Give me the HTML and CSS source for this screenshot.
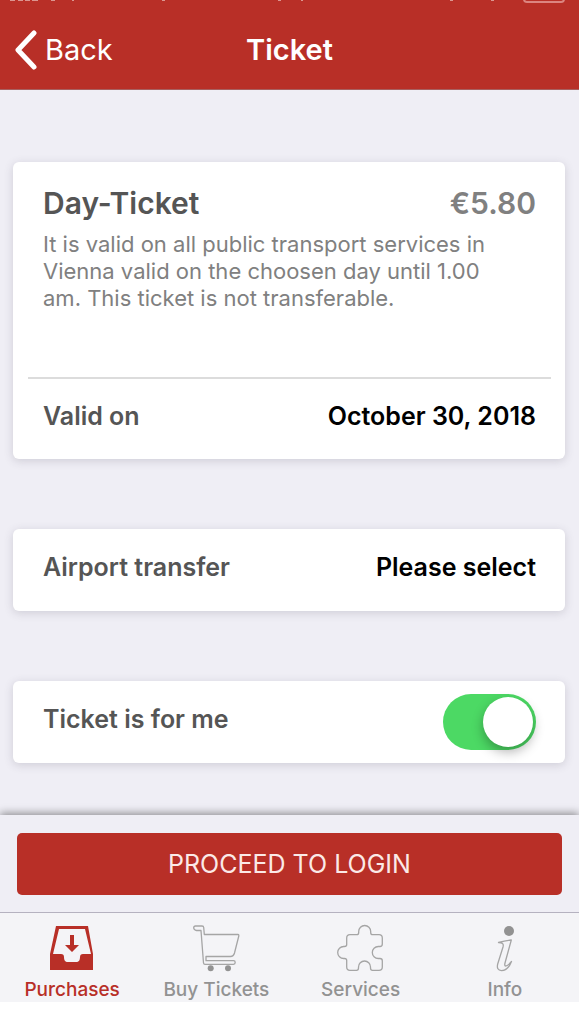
FILE: index.html
```html
<!DOCTYPE html>
<html lang="en">
<head>
<meta charset="utf-8">
<meta name="viewport" content="width=device-width, initial-scale=1">
<title>Ticket</title>
<link rel="stylesheet" href="styles.css">
</head>
<body>
<div class="app">
  <header class="header">
    <div class="status" aria-hidden="true">
      <svg class="status-signal" viewBox="0 0 320 3" width="320" height="3">
        <path d="M10 0h5v1h-5zM18 0h5v1h-5zM25 0h5v1h-5zM32 0h6v1h-6zM51 0h4v1h-4zM72 0h2v1h-2zM162 0h3v1h-3zM278 0h3v1h-3zM301 0h2v1h-2z"/>
      </svg>
      <svg class="status-battery" viewBox="0 0 120 3" width="120" height="3">
        <path d="M4 0h3v1h-3zM45 0h3v1h-3z"/>
        <path class="battery-edge" d="M78-6V-1Q78 2 81 2H115Q118 2 118-1V-6"/>
      </svg>
    </div>
    <div class="navbar">
      <button class="back" type="button">
        <svg viewBox="0 0 24 42" width="24" height="42" aria-hidden="true"><path d="M21 4 5 21 21 38"/></svg>
        <span>Back</span>
      </button>
      <h1 class="title">Ticket</h1>
    </div>
  </header>

  <main class="content">
    <section class="card">
      <div class="ticket">
        <div class="ticket-head">
          <h2 class="ticket-name">Day-Ticket</h2>
          <span class="price">€5.80</span>
        </div>
        <p class="description">It is valid on all public transport services in Vienna valid on the choosen day until 1.00 am. This ticket is not transferable.</p>
      </div>
      <div class="row row-divided">
        <span class="label" id="valid-label">Valid on</span>
        <button class="value" type="button" aria-describedby="valid-label">October 30, 2018</button>
      </div>
    </section>

    <section class="card">
      <div class="row">
        <span class="label" id="airport-label">Airport transfer</span>
        <button class="value" type="button" aria-describedby="airport-label">Please select</button>
      </div>
    </section>

    <section class="card">
      <div class="row">
        <label class="label" for="for-me">Ticket is for me</label>
        <input class="toggle" type="checkbox" id="for-me" checked>
      </div>
    </section>
  </main>

  <div class="action">
    <button class="proceed" type="button">PROCEED TO LOGIN</button>
  </div>

  <nav class="tabs">
    <a class="tab tab-active" href="#purchases">
      <svg class="icon" viewBox="0 0 48 48" aria-hidden="true">
        <path class="solid" fill-rule="evenodd" d="M8 2H40L45 30V46H2V30ZM11 5 5 30H13C15 30 16 31 16 33C16 36 17 38 20 38H28C31 38 32 36 32 33C32 31 33 30 35 30H43L37 5ZM22 11H26V21H31L24 28 17 21H22Z"/>
      </svg>
      <span>Purchases</span>
    </a>
    <a class="tab" href="#buy">
      <svg class="icon" viewBox="0 0 48 48" aria-hidden="true">
        <path class="line" d="M3.500 2H10Q11.600 2 11.700 3.500L12.300 10.500H46Q47 10.500 46.800 12L42.500 29Q41.500 32.500 38.500 32.500H14V36.700H41.500Q43.200 36.700 43.200 38.500T41.500 40.300H13Q11.700 40.300 11.500 39L9 6.500H4.500Q2 6.200 1.700 4Q1.700 2 3.500 2Z"/>
        <circle class="solid" cx="18.700" cy="44.300" r="3"/>
        <circle class="solid" cx="36" cy="44.300" r="3"/>
      </svg>
      <span>Buy Tickets</span>
    </a>
    <a class="tab" href="#services">
      <svg class="icon" viewBox="0 0 48 48" aria-hidden="true">
        <path class="line" d="M13 10.700H19.700Q21.700 10.700 21.700 8.500V7.500A6 6 0 0 1 33.700 7.500V8.500Q33.700 10.700 35.700 10.700H42Q45.300 10.700 45.300 14V20Q45.300 22.500 43 22.500H41.300A6 6 0 0 0 41.300 34.500H43Q45.300 34.500 45.300 36.700V43Q45.300 46.300 42 46.300H35.500Q33.500 46.300 33.500 44V43A6 6 0 0 0 21.500 43V44Q21.500 46.300 19.500 46.300H13Q9.700 46.300 9.700 43V36.500Q9.700 34.500 7.500 34.500H6.700A6 6 0 0 1 6.700 22.500H7.500Q9.700 22.500 9.700 20.500V14Q9.700 10.700 13 10.700Z"/>
      </svg>
      <span>Services</span>
    </a>
    <a class="tab" href="#info">
      <svg class="icon" viewBox="0 0 48 48" aria-hidden="true">
        <circle class="solid" cx="28" cy="7" r="5"/>
        <path class="line" d="M17.500 18.500Q24 17 30.300 16L24 39Q23.300 42 24.500 42Q26.500 42 30.500 37.500Q27 46.600 20.500 46.600Q15.200 46.300 16.700 40L22 23Q22.700 20.500 21.500 19.500Q20.500 18.500 17.500 18.500Z"/>
      </svg>
      <span>Info</span>
    </a>
  </nav>
</div>
</body>
</html>
```
FILE: styles.css
```css
* {
  box-sizing: border-box;
}

body {
  margin: 0;
  background: #fff;
  font-family: Inter, "Liberation Sans", sans-serif;
}

button {
  margin: 0;
  padding: 0;
  border: 0;
  background: none;
  font: inherit;
  color: inherit;
  cursor: pointer;
}

.app {
  background: #efeef5;
}

.header {
  background: #b82f27;
  color: #fff;
  border-bottom: 1px solid #a8605f;
}

.status {
  display: flex;
  justify-content: space-between;
  height: 3px;
  padding-right: 13px;
}

.status svg {
  fill: #dc9590;
}

.status .battery-edge {
  fill: none;
  stroke: #dc8580;
  stroke-width: 2;
}

.navbar {
  display: grid;
  grid-template-columns: 1fr auto 1fr;
  align-items: center;
  height: 86px;
  padding: 0 13px;
}

.back {
  display: flex;
  align-items: center;
  justify-self: start;
  gap: 8px;
  padding-top: 8px;
  font-size: 29px;
  line-height: 36px;
}

.back svg {
  fill: none;
  stroke: #fff;
  stroke-width: 5;
  stroke-linecap: round;
  stroke-linejoin: round;
}

.title {
  margin: 0;
  padding-top: 8px;
  font-size: 29px;
  line-height: 36px;
  font-weight: 600;
}

.content {
  display: flex;
  flex-direction: column;
  gap: 70px;
  padding: 72px 14px 52px 13px;
}

.card {
  background: #fff;
  border-radius: 6px;
  box-shadow: 0 2px 10px rgba(60, 55, 80, 0.18);
}

.ticket {
  padding: 23px 29px 65px 30px;
}

.ticket-head {
  display: flex;
  align-items: center;
  justify-content: space-between;
  margin-bottom: 10px;
  font-size: 30px;
  line-height: 36px;
}

.ticket-name {
  margin: 0;
  font-size: inherit;
  font-weight: 600;
  color: #555;
}

.price {
  font-weight: 600;
  color: #808080;
}

.description {
  max-width: 460px;
  margin: 0;
  font-size: 22px;
  line-height: 27px;
  color: #808080;
}

.row {
  display: flex;
  align-items: center;
  justify-content: space-between;
  height: 82px;
  padding: 0 29px 0 30px;
}

.row-divided {
  margin: 0 14px 0 15px;
  padding: 0 15px;
  border-top: 2px solid #dcdcdc;
}

.label,
.value {
  padding-bottom: 6px;
  font-size: 25px;
  line-height: 32px;
  font-weight: 600;
}

.label {
  color: #555;
}

.value {
  color: #000;
}

.toggle {
  appearance: none;
  display: flex;
  align-items: center;
  width: 93px;
  height: 56px;
  margin: 0;
  padding: 0 3px;
  border-radius: 28px;
  background: #d8d8dc;
  cursor: pointer;
}

.toggle::before {
  content: "";
  width: 50px;
  height: 50px;
  border-radius: 50%;
  background: #fff;
  box-shadow: 0 5px 12px rgba(0, 0, 0, 0.3);
}

.toggle:checked {
  justify-content: flex-end;
  background: #4cd964;
}

.action {
  padding: 18px 17px 17px;
  background: #efeef5;
  box-shadow: 0 -2px 8px rgba(0, 0, 0, 0.4);
  clip-path: inset(-20px 0 0 0);
}

.proceed {
  display: block;
  width: 100%;
  height: 62px;
  border-radius: 5px;
  background: #b82f27;
  color: #fbe9e7;
  font-size: 25px;
}

.tabs {
  display: grid;
  grid-template-columns: repeat(4, 1fr);
  padding-right: 2px;
  background: #f4f4f7;
  border-top: 1px solid #b5b2c0;
}

.tab {
  display: flex;
  flex-direction: column;
  align-items: center;
  gap: 6px;
  padding-top: 11px;
  color: #929292;
  font-size: 19px;
  line-height: 24px;
  font-weight: 500;
  text-decoration: none;
}

.tab-active {
  color: #b82f27;
}

.icon {
  width: 48px;
  height: 48px;
}

.icon .solid {
  fill: currentColor;
}

.icon .line {
  fill: none;
  stroke: #a5a5a5;
  stroke-width: 1.3;
  stroke-linejoin: round;
}
```
